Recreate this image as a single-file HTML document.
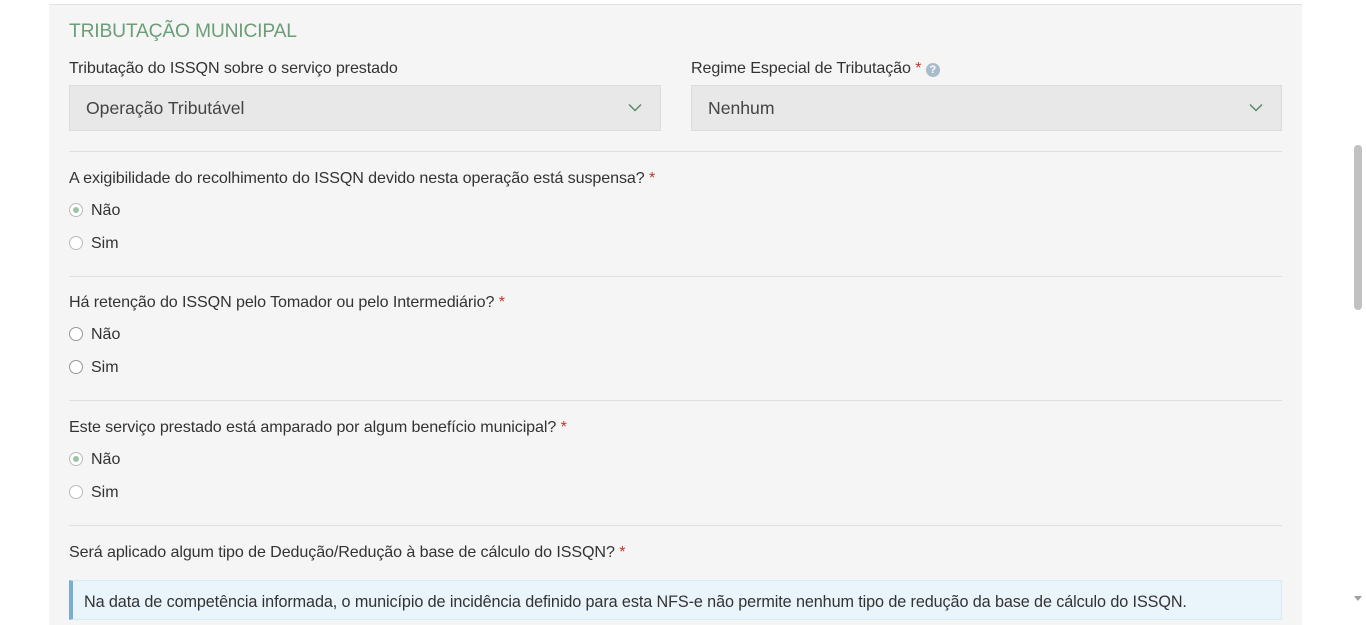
<!DOCTYPE html>
<html><head><meta charset="utf-8"><style>
html,body{margin:0;padding:0;background:#fff;width:1366px;height:607px;overflow:hidden;font-family:"Liberation Sans",sans-serif;color:#333}
.panel{position:absolute;left:49px;top:4px;width:1253px;height:620px;background:#f5f5f5;border-top:1px solid #e2e2e2}
.a{position:absolute;white-space:nowrap}
.h{left:69px;top:21px;font-size:19.3px;color:#6a9e77;letter-spacing:-0.2px}
.lbl{font-size:16.1px;color:#333;letter-spacing:-0.1px}
.req{color:#c0392b}
.sel{position:absolute;top:85px;height:44px;background:#e8e8e8;border:1px solid #dcdcdc;box-sizing:content-box}
.sel span{position:absolute;left:16px;top:12px;font-size:17.6px;color:#444}
.sel svg{position:absolute;right:18px;top:17px}
.hr{position:absolute;left:69px;width:1213px;height:1px;background:#e0e0e0}
.r{position:absolute;left:69px;width:14px;height:14px;border:1px solid #bbb;border-radius:50%;background:#fff;box-sizing:border-box}
.r.on::after{content:"";position:absolute;left:3px;top:3px;width:6px;height:6px;border-radius:50%;background:#9cc4a6}
.rl{left:91px;font-size:16px;color:#333}
.info{position:absolute;left:69px;top:580px;width:1213px;height:40px;background:#eaf4fb;border:1px solid #d6e9f5;border-left:4px solid #7aaed0;box-sizing:border-box}
.sb{position:absolute;left:1352px;top:0;width:14px;height:607px;background:#fff}
.th{position:absolute;left:1354px;top:145px;width:8px;height:165px;border-radius:4px;background:#c1c1c1}
</style></head><body>
<div class="panel"></div>
<div class="a h">TRIBUTAÇÃO MUNICIPAL</div>
<div class="a lbl" style="left:69px;top:59px">Tributação do ISSQN sobre o serviço prestado</div>
<div class="a lbl" style="left:691px;top:59px">Regime Especial de Tributação <span class="req">*</span> <span style="display:inline-block;width:14px;height:14px;border-radius:50%;background:#a9bccb;color:#fff;font-size:11px;line-height:14px;text-align:center;font-weight:bold;vertical-align:0px">?</span></div>
<div class="sel" style="left:69px;width:590px"><span>Operação Tributável</span><svg width="14" height="9" viewBox="0 0 14 9"><path d="M1 1.5L7 7.5L13 1.5" fill="none" stroke="#5b8a68" stroke-width="1.5"/></svg></div>
<div class="sel" style="left:691px;width:589px"><span>Nenhum</span><svg width="14" height="9" viewBox="0 0 14 9"><path d="M1 1.5L7 7.5L13 1.5" fill="none" stroke="#5b8a68" stroke-width="1.5"/></svg></div>
<div class="hr" style="top:151px"></div>
<div class="a lbl" style="left:69px;top:169px">A exigibilidade do recolhimento do ISSQN devido nesta operação está suspensa? <span class="req">*</span></div>
<div class="r on" style="top:203px"></div><div class="a rl" style="top:202px">Não</div>
<div class="r" style="top:236px"></div><div class="a rl" style="top:235px">Sim</div>
<div class="hr" style="top:276px"></div>
<div class="a lbl" style="left:69px;top:293px">Há retenção do ISSQN pelo Tomador ou pelo Intermediário? <span class="req">*</span></div>
<div class="r" style="top:327px;border-color:#999"></div><div class="a rl" style="top:326px">Não</div>
<div class="r" style="top:360px;border-color:#999"></div><div class="a rl" style="top:359px">Sim</div>
<div class="hr" style="top:400px"></div>
<div class="a lbl" style="left:69px;top:418px">Este serviço prestado está amparado por algum benefício municipal? <span class="req">*</span></div>
<div class="r on" style="top:452px"></div><div class="a rl" style="top:451px">Não</div>
<div class="r" style="top:485px"></div><div class="a rl" style="top:484px">Sim</div>
<div class="hr" style="top:525px"></div>
<div class="a lbl" style="left:69px;top:543px">Será aplicado algum tipo de Dedução/Redução à base de cálculo do ISSQN? <span class="req">*</span></div>
<div class="info"></div>
<div class="a lbl" style="left:84px;top:593px;font-size:16.2px">Na data de competência informada, o município de incidência definido para esta NFS-e não permite nenhum tipo de redução da base de cálculo do ISSQN.</div>
<div class="sb"></div><div class="th"></div>
<div class="a" style="left:1354px;top:596px;width:0;height:0;border-left:4px solid transparent;border-right:4px solid transparent;border-top:5px solid #a0a0a0"></div>
</body></html>
